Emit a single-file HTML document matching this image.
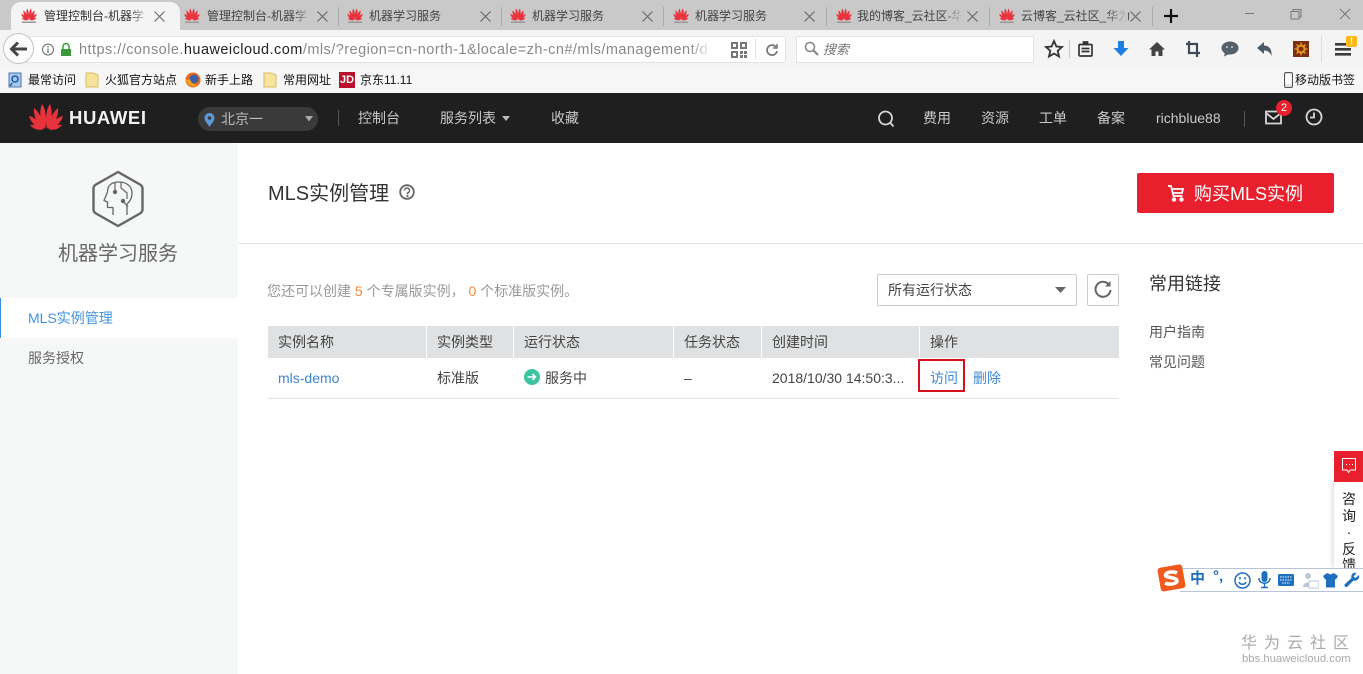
<!DOCTYPE html>
<html lang="zh-CN"><head><meta charset="utf-8"><title>MLS实例管理</title>
<style>
html,body{margin:0;padding:0;background:#fff}
body{width:1363px;height:674px;position:relative;overflow:hidden;font-family:"Liberation Sans","Noto Sans CJK SC",sans-serif;font-size:14px;color:#333}
.a,.t{position:absolute}
.t{white-space:nowrap;line-height:18px}
svg{position:absolute;display:block}
.sep{position:absolute;width:1px;background:#aaa}
.tab{color:#444;font-size:12px;top:7px}
.n{color:#c9c9c9;font-size:14px;top:109px}
.th{top:333px;color:#444}
.w{position:absolute;top:326px;width:1px;height:32px;background:#fff}
.c{top:11px}
</style></head><body>
<svg width="0" height="0" style="position:absolute"><defs>
<symbol id="hw" viewBox="0 0 34 27">
<g fill="#e8323c">
<path d="M16 26C11 19 10 8 13 1 17 6 18 18 16 26Z"/>
<path d="M18 26C23 19 24 8 21 1 17 6 16 18 18 26Z"/>
<path d="M15 26C9 22 4 13 5 5 10 9 15 18 15 26Z"/>
<path d="M19 26C25 22 30 13 29 5 24 9 19 18 19 26Z"/>
<path d="M14 26C8 25 2 20 0 13 6 14 12 20 14 26Z"/>
<path d="M20 26C26 25 32 20 34 13 28 14 22 20 20 26Z"/>
<path d="M14 26.500C9 27.500 4 26 1 22 6 21 11 23 14 26.500Z"/>
<path d="M20 26.500C25 27.500 30 26 33 22 28 21 23 23 20 26.500Z"/>
</g></symbol>
<symbol id="fav" viewBox="0 0 16 16"><use href="#hw" width="16" height="12.500"/><rect x="1" y="13.500" width="14" height="1.500" fill="#999"/></symbol>
<symbol id="cl" viewBox="0 0 11 11"><path d="M.5 .5L10.500 10.500M10.500 .5L.5 10.500" fill="none" stroke="#666" stroke-width="1.100"/></symbol>
</defs></svg>

<!-- tab strip -->
<div class="a" style="left:0;top:0;width:1363px;height:30px;background:#c9c9c9"></div>
<div class="a" style="left:11px;top:2px;width:169px;height:28px;background:#f4f4f4;border-radius:10px 10px 0 0"></div>
<svg style="left:21px;top:8px" width="16" height="16"><use href="#fav"/></svg><span class="t tab" style="left:44px;color:#333">管理控制台-机器学</span>
<svg style="left:184px;top:8px" width="16" height="16"><use href="#fav"/></svg><span class="t tab" style="left:207px">管理控制台-机器学</span>
<div class="sep" style="left:338px;top:7px;height:19px"></div>
<svg style="left:347px;top:8px" width="16" height="16"><use href="#fav"/></svg><span class="t tab" style="left:369px">机器学习服务</span>
<div class="sep" style="left:501px;top:7px;height:19px"></div>
<svg style="left:510px;top:8px" width="16" height="16"><use href="#fav"/></svg><span class="t tab" style="left:532px">机器学习服务</span>
<div class="sep" style="left:663px;top:7px;height:19px"></div>
<svg style="left:673px;top:8px" width="16" height="16"><use href="#fav"/></svg><span class="t tab" style="left:695px">机器学习服务</span>
<div class="sep" style="left:826px;top:7px;height:19px"></div>
<svg style="left:836px;top:8px" width="16" height="16"><use href="#fav"/></svg><span class="t tab" style="left:857px">我的博客_云社区-华</span>
<div class="sep" style="left:989px;top:7px;height:19px"></div>
<svg style="left:999px;top:8px" width="16" height="16"><use href="#fav"/></svg><span class="t tab" style="left:1021px">云博客_云社区_华为</span>
<div class="sep" style="left:1152px;top:7px;height:19px"></div>
<svg style="left:1163px;top:8px" width="16" height="16"><path d="M8 1V15M1 8H15" stroke="#111" stroke-width="2.200"/></svg>
<svg style="left:1240px;top:8px" width="120" height="14" fill="none" stroke="#777"><path d="M5 5.500H14"/><path d="M51 3.500H59V11H51ZM53 3.500V1.500H61V9H59"/><path d="M100 1L110 11M110 1L100 11"/></svg>
<div class="a" style="left:130px;top:7px;width:18px;height:18px;background:linear-gradient(90deg,rgba(244,244,244,0),#f4f4f4)"></div>
<div class="a" style="left:293px;top:7px;width:18px;height:18px;background:linear-gradient(90deg,rgba(201,201,201,0),#c9c9c9)"></div>
<div class="a" style="left:943px;top:7px;width:20px;height:18px;background:linear-gradient(90deg,rgba(201,201,201,0),#c9c9c9)"></div>
<div class="a" style="left:1106px;top:7px;width:22px;height:18px;background:linear-gradient(90deg,rgba(201,201,201,0),#c9c9c9)"></div>
<svg class="c" style="left:154px" width="11" height="11"><use href="#cl"/></svg>
<svg class="c" style="left:317px" width="11" height="11"><use href="#cl"/></svg>
<svg class="c" style="left:480px" width="11" height="11"><use href="#cl"/></svg>
<svg class="c" style="left:642px" width="11" height="11"><use href="#cl"/></svg>
<svg class="c" style="left:804px" width="11" height="11"><use href="#cl"/></svg>
<svg class="c" style="left:967px" width="11" height="11"><use href="#cl"/></svg>
<svg class="c" style="left:1130px" width="11" height="11"><use href="#cl"/></svg>

<!-- nav toolbar -->
<div class="a" style="left:0;top:30px;width:1363px;height:36px;background:#f4f4f4"></div>
<div class="a" style="left:26px;top:36px;width:758px;height:25px;background:#fff;border:1px solid #e3e3e3;box-sizing:content-box;border-radius:2px"></div>
<div class="a" style="left:3px;top:33px;width:29px;height:29px;border-radius:50%;background:#fbfbfb;border:1px solid #c4c4c4"></div>
<svg style="left:9px;top:41px" width="20" height="16"><path d="M9 1.500L2.500 8 9 14.500M3 8H18" fill="none" stroke="#444" stroke-width="3"/></svg>
<svg style="left:41px;top:42px" width="32" height="16"><circle cx="7" cy="7.500" r="5.500" fill="none" stroke="#666"/><path d="M7 6.500V11M7 4V5.500" stroke="#666" stroke-width="1.200"/><rect x="20" y="7" width="10" height="7" fill="#3a9a3a"/><path d="M22 7V4.500a3 3 0 0 1 6 0V7" fill="none" stroke="#3a9a3a" stroke-width="1.500"/></svg>
<span class="t" style="left:79px;top:41px;font-size:14.500px;color:#888;letter-spacing:.46px">https://console.<span style="color:#222">huaweicloud.com</span>/mls/?region=cn-north-1&amp;locale=zh-cn#/mls/management/d</span>
<div class="a" style="left:712px;top:37px;width:68px;height:25px;background:#fff"></div>
<div class="a" style="left:690px;top:37px;width:22px;height:25px;background:linear-gradient(90deg,rgba(255,255,255,0),#fff)"></div>
<svg style="left:731px;top:42px" width="16" height="16" fill="#777"><path d="M0 0H7V7H0ZM2 2V5H5V2ZM9 0H16V7H9ZM11 2V5H14V2ZM0 9H7V16H0ZM2 11V14H5V11ZM9 9H12V12H9ZM13 9H16V12H13ZM9 13H12V16H9ZM13 13H16V16H13Z" fill-rule="evenodd"/></svg>
<div class="sep" style="left:755px;top:38px;height:21px;background:#e2e2e2"></div>
<svg style="left:765px;top:43px" width="14" height="14" fill="none" stroke="#777" stroke-width="1.800"><path d="M11 4A5 5 0 1 0 12 8"/><path d="M12 1V5H8" stroke-width="1.500"/></svg>
<div class="a" style="left:796px;top:36px;width:236px;height:25px;background:#fff;border:1px solid #e3e3e3"></div>
<svg style="left:804px;top:41px" width="15" height="15" fill="none" stroke="#888" stroke-width="1.600"><circle cx="6" cy="6" r="4.500"/><path d="M9.500 9.500L14 14" stroke-width="2.200"/></svg>
<span class="t" style="left:823px;top:41px;color:#777;font-size:13px;font-style:italic">搜索</span>
<svg style="left:1044px;top:39px" width="20" height="20"><path d="M10 2L12.400 7.500 18 8 13.700 11.800 15 17.500 10 14.500 5 17.500 6.300 11.800 2 8 7.600 7.500Z" fill="none" stroke="#333" stroke-width="1.800"/></svg>
<div class="sep" style="left:1069px;top:40px;height:18px;background:#ccc"></div>
<svg style="left:1078px;top:41px" width="15" height="16" fill="none" stroke="#333" stroke-width="1.700"><rect x="1" y="3.500" width="13" height="11.500" rx="1"/><path d="M3.500 7.500H11.500M3.500 10.500H11.500"/><rect x="5.500" y="1" width="4" height="2.500" fill="#333"/></svg>
<svg style="left:1113px;top:41px" width="16" height="16"><path d="M5 0H11V7H15.500L8 15 .5 7H5Z" fill="#1e7fe0"/></svg>
<svg style="left:1149px;top:41px" width="16" height="16"><path d="M8 1L16 8.500H13.500V15H9.500V10.500H6.500V15H2.500V8.500H0Z" fill="#444"/></svg>
<svg style="left:1186px;top:41px" width="14" height="16" fill="none" stroke="#3f4b57" stroke-width="2.200"><path d="M3 0V12H14M0 3H11V16"/></svg>
<svg style="left:1221px;top:41px" width="18" height="16"><ellipse cx="9" cy="7" rx="8.500" ry="6.500" fill="#53616d"/><path d="M4 11L3 15.500 8 13Z" fill="#53616d"/><circle cx="6" cy="6" r="1" fill="#ccc"/><circle cx="11" cy="6" r="1" fill="#ccc"/></svg>
<svg style="left:1257px;top:42px" width="16" height="16"><path d="M7 0V3.500C12 3.500 15 7 14.500 14 13 10 10.500 8.500 7 8.500V12L0 6Z" fill="#4d5a66"/></svg>
<svg style="left:1293px;top:41px" width="16" height="16"><rect width="16" height="16" fill="#7c2f0f"/><circle cx="8" cy="8" r="3.500" fill="none" stroke="#eb9a22" stroke-width="2"/><path d="M8 1.500V4M8 12V14.500M1.500 8H4M12 8H14.500M3.500 3.500L5 5M11 11L12.500 12.500M12.500 3.500L11 5M5 11L3.500 12.500" stroke="#eb9a22" stroke-width="1.300"/></svg>
<div class="sep" style="left:1321px;top:36px;height:26px;background:#ddd"></div>
<svg style="left:1335px;top:43px" width="16" height="14" fill="#3b3b3b"><rect width="16" height="2.600"/><rect y="5" width="16" height="2.600"/><rect y="10" width="16" height="2.600"/></svg>
<div class="a" style="left:1346px;top:36px;width:11px;height:11px;background:#fdb917;border-radius:2px;color:#fff;font-size:9px;line-height:11px;text-align:center;font-weight:bold">!</div>

<!-- bookmarks -->
<div class="a" style="left:0;top:66px;width:1363px;height:27px;background:#f6f6f6"></div>
<svg style="left:8px;top:72px" width="15" height="16"><rect x="1" y="1" width="12" height="14" fill="#a9c8ea" stroke="#4b79b5"/><circle cx="7" cy="7" r="3" fill="none" stroke="#1f5aa5" stroke-width="1.500"/><path d="M4 11L2 14" stroke="#1f5aa5" stroke-width="1.500"/></svg>
<span class="t" style="left:28px;top:71px;font-size:12px;color:#111">最常访问</span>
<svg style="left:85px;top:72px" width="14" height="16"><path d="M1 1H8L13 3V15H1Z" fill="#f8e39c" stroke="#d9bc63"/></svg>
<span class="t" style="left:105px;top:71px;font-size:12px;color:#111">火狐官方站点</span>
<svg style="left:185px;top:72px" width="16" height="16"><circle cx="8" cy="8" r="7.500" fill="#e66a1f"/><circle cx="9" cy="7" r="4.500" fill="#3d5fa8"/><path d="M1 8C2 14 9 16 13 13 9 13 6 11 5 7Z" fill="#f4a11d"/></svg>
<span class="t" style="left:205px;top:71px;font-size:12px;color:#111">新手上路</span>
<svg style="left:263px;top:72px" width="14" height="16"><path d="M1 1H8L13 3V15H1Z" fill="#f8e39c" stroke="#d9bc63"/></svg>
<span class="t" style="left:283px;top:71px;font-size:12px;color:#111">常用网址</span>
<div class="a" style="left:339px;top:72px;width:16px;height:16px;background:#b8112b;color:#fff;font-size:11px;font-weight:bold;line-height:16px;text-align:center">JD</div>
<span class="t" style="left:360px;top:71px;font-size:12px;color:#111">京东11.11</span>
<svg style="left:1284px;top:72px" width="9" height="16"><rect x=".5" y=".5" width="8" height="15" rx="1.500" fill="#ddd" stroke="#555"/><rect x="1.500" y="2.500" width="6" height="10" fill="#fff"/></svg>
<span class="t" style="left:1295px;top:71px;font-size:12px;color:#111">移动版书签</span>

<!-- header -->
<div class="a" style="left:0;top:93px;width:1363px;height:50px;background:#1f1f1f"></div>
<svg style="left:29px;top:103px" width="34" height="27"><use href="#hw"/></svg>
<span class="t" style="left:69px;top:109px;font-size:18.500px;font-weight:bold;color:#f2f2f2;letter-spacing:.6px">HUAWEI</span>
<div class="a" style="left:198px;top:107px;width:120px;height:24px;background:#3a3a3a;border-radius:12px"></div>
<svg style="left:204px;top:113px" width="11" height="14"><path d="M5.500 0A5 5 0 0 1 10.500 5C10.500 8 7 11 5.500 14 4 11 .5 8 .5 5A5 5 0 0 1 5.500 0Z" fill="#5b9bdc"/><circle cx="5.500" cy="5" r="1.800" fill="#3a3a3a"/></svg>
<span class="t n" style="left:221px;top:110px;color:#bbb">北京一</span>
<svg style="left:305px;top:116px" width="8" height="6"><path d="M0 0H8L4 5.500Z" fill="#aaa"/></svg>
<div class="sep" style="left:338px;top:110px;height:16px;background:#555"></div>
<span class="t n" style="left:358px">控制台</span>
<span class="t n" style="left:440px">服务列表</span>
<svg style="left:502px;top:116px" width="8" height="5"><path d="M0 0H8L4 5Z" fill="#bbb"/></svg>
<span class="t n" style="left:551px">收藏</span>
<svg style="left:877px;top:110px" width="18" height="18" fill="none" stroke="#d6d6d6" stroke-width="1.800"><circle cx="8.500" cy="8" r="6.500"/><path d="M13 12.500L16.500 16.500"/></svg>
<span class="t n" style="left:923px">费用</span>
<span class="t n" style="left:981px">资源</span>
<span class="t n" style="left:1039px">工单</span>
<span class="t n" style="left:1097px">备案</span>
<span class="t n" style="left:1156px">richblue88</span>
<div class="sep" style="left:1244px;top:111px;height:16px;background:#555"></div>
<svg style="left:1265px;top:110px" width="17" height="15" fill="none" stroke="#d6d6d6" stroke-width="1.800"><path d="M1 1.500H16V13.500H1ZM1 3L8.500 9 16 3"/></svg>
<div class="a" style="left:1276px;top:100px;width:16px;height:16px;border-radius:50%;background:#e8202e;color:#fff;font-size:11px;line-height:16px;text-align:center">2</div>
<svg style="left:1305px;top:108px" width="18" height="18" fill="none" stroke="#d6d6d6" stroke-width="1.800"><circle cx="9" cy="9" r="7.500"/><path d="M9 4.500V9.500H5"/></svg>

<!-- sidebar -->
<div class="a" style="left:0;top:143px;width:238px;height:531px;background:#f6f8f8"></div>
<svg style="left:92px;top:170px" width="52" height="58" fill="none" stroke="#666" stroke-linejoin="round"><path d="M26 2L48 14.500Q50.500 16 50.500 18.500V39.500Q50.500 42 48 43.500L26 56 4 43.500Q1.500 42 1.500 39.500V18.500Q1.500 16 4 14.500Z" stroke-width="2.400"/><path d="M21 45V37.500H15.500V32L12 30.500 15.500 22C15.500 15 20 12 27 12 34 12 40 16 40 23 40 29 37 32 35 34V45" stroke-width="1.300"/><path d="M23 12V21M29 12V18L35 23V29M31 31L36 37" stroke-width="1.200"/><circle cx="23" cy="22" r="1.700" fill="#666"/><circle cx="31" cy="31" r="1.700" fill="#666"/></svg>
<span class="t" style="left:58px;top:241px;font-size:20px;line-height:26px;color:#666">机器学习服务</span>
<div class="a" style="left:0;top:298px;width:238px;height:40px;background:#fff"></div>
<div class="a" style="left:0;top:298px;width:1px;height:40px;background:#3b8fdc"></div>
<span class="t" style="left:28px;top:309px;color:#3f93de;font-size:14px">MLS实例管理</span>
<span class="t" style="left:28px;top:349px;color:#666;font-size:14px">服务授权</span>

<!-- title -->
<span class="t" style="left:268px;top:181px;font-size:20px;line-height:26px;color:#333">MLS实例管理</span>
<svg style="left:399px;top:184px" width="16" height="16" fill="none" stroke="#666" stroke-width="1.800"><circle cx="8" cy="8" r="6.800"/><path d="M5.500 6.500A2.500 2.500 0 1 1 8.500 9V10.200" stroke-width="1.500"/><circle cx="8.500" cy="12" r=".6" fill="#666" stroke-width="1"/></svg>
<div class="a" style="left:1137px;top:173px;width:197px;height:40px;background:#e8202e;border-radius:2px"></div>
<svg style="left:1167px;top:184px" width="18" height="18" fill="none" stroke="#fff" stroke-width="1.800"><path d="M1 2H4L6.500 12H15.500M5 5H16L15 9H6"/><circle cx="7" cy="15.500" r="1.300" fill="#fff"/><circle cx="14.500" cy="15.500" r="1.300" fill="#fff"/></svg>
<span class="t" style="left:1194px;top:181px;font-size:18px;line-height:26px;color:#fff">购买MLS实例</span>
<div class="a" style="left:238px;top:243px;width:1125px;height:1px;background:#e5e5e5"></div>

<!-- content -->
<span class="t" style="left:267px;top:282px;color:#999;font-size:14px">您还可以创建 <span style="color:#ee8a3c">5</span> 个专属版实例， <span style="color:#ee8a3c">0</span> 个标准版实例。</span>
<div class="a" style="left:877px;top:274px;width:198px;height:30px;border:1px solid #ccc;border-radius:2px;background:#fff"></div>
<span class="t" style="left:888px;top:281px;color:#444">所有运行状态</span>
<svg style="left:1055px;top:287px" width="11" height="7"><path d="M0 0H11L5.500 6Z" fill="#666"/></svg>
<div class="a" style="left:1087px;top:274px;width:30px;height:30px;border:1px solid #ccc;border-radius:2px;background:#fff"></div>
<svg style="left:1094px;top:280px" width="18" height="18" fill="none" stroke="#666" stroke-width="2"><path d="M15.500 5.500A7.500 7.500 0 1 0 16.500 10"/><path d="M16.500 1V6.500H11" fill="#666" stroke="none"/></svg>

<div class="a" style="left:268px;top:326px;width:851px;height:32px;background:#dfe1e2"></div>
<div class="w" style="left:426px"></div><div class="w" style="left:513px"></div><div class="w" style="left:673px"></div><div class="w" style="left:761px"></div><div class="w" style="left:919px"></div>
<span class="t th" style="left:278px">实例名称</span>
<span class="t th" style="left:437px">实例类型</span>
<span class="t th" style="left:524px">运行状态</span>
<span class="t th" style="left:684px">任务状态</span>
<span class="t th" style="left:772px">创建时间</span>
<span class="t th" style="left:930px">操作</span>
<span class="t" style="left:278px;top:369px;color:#3c87d0;font-size:14px">mls-demo</span>
<span class="t" style="left:437px;top:369px;color:#444">标准版</span>
<svg style="left:524px;top:369px" width="16" height="16"><circle cx="8" cy="8" r="8" fill="#3cc4a0"/><path d="M3.500 8H11.500M8.500 5L11.500 8 8.500 11" fill="none" stroke="#fff" stroke-width="1.600"/></svg>
<span class="t" style="left:545px;top:369px;color:#444">服务中</span>
<span class="t" style="left:684px;top:369px;color:#444">–</span>
<span class="t" style="left:772px;top:369px;color:#444;font-size:14px">2018/10/30 14:50:3...</span>
<div class="a" style="left:918px;top:359px;width:43px;height:29px;border:2px solid #d8101c;background:#fff"></div>
<span class="t" style="left:930px;top:369px;color:#3c87d0">访问</span>
<span class="t" style="left:973px;top:369px;color:#3c87d0">删除</span>
<div class="a" style="left:268px;top:398px;width:851px;height:1px;background:#e3e3e3"></div>

<span class="t" style="left:1149px;top:273px;font-size:18px;line-height:22px;color:#333">常用链接</span>
<span class="t" style="left:1149px;top:323px;color:#555">用户指南</span>
<span class="t" style="left:1149px;top:353px;color:#555">常见问题</span>

<!-- feedback -->
<div class="a" style="left:1334px;top:482px;width:29px;height:86px;background:#fff;box-shadow:-2px 0 4px rgba(0,0,0,.12);overflow:hidden"><span class="a" style="left:7px;top:9px;font-size:14px;line-height:16.500px;color:#222;width:16px;text-align:center">咨<br>询<br>·<br>反<br>馈</span></div>
<div class="a" style="left:1334px;top:451px;width:29px;height:31px;background:#e8202e"></div>
<svg style="left:1341px;top:457px" width="16" height="18" fill="none" stroke="#fff"><path d="M1.500 1.500H14.500V13H9L7.500 15.500 6 13H1.500Z"/><path d="M5 7.500H6M8 7.500H9M11 7.500H12"/></svg>

<!-- IME bar -->
<div class="a" style="left:1180px;top:568px;width:183px;height:22px;background:#fff;border-top:1px solid #b5c4d8;border-bottom:1px solid #b5c4d8"></div>
<svg style="left:1157px;top:564px" width="29" height="29"><rect x="2" y="2" width="25" height="24" rx="3" fill="#f05a1c" transform="rotate(-10 14 14)"/><path d="M20 9C16 7 9 8 8.500 11 8 14 20 13 20 17 19.500 20 12 21 8 19" fill="none" stroke="#fff" stroke-width="3.600"/></svg>
<span class="t" style="left:1190px;top:570px;font-size:15px;font-weight:bold;color:#1f6fbf">中</span>
<span class="t" style="left:1213px;top:568px;font-size:15px;font-weight:bold;color:#1f6fbf">°,</span>
<svg style="left:1234px;top:572px" width="17" height="17" fill="none" stroke="#1f6fbf" stroke-width="1.500"><circle cx="8.500" cy="8.500" r="7.500"/><path d="M5 10C6 13 11 13 12 10"/><path d="M6 5V7.500M11 5V7.500"/></svg>
<svg style="left:1258px;top:571px" width="13" height="18" fill="#1f6fbf"><rect x="3.500" y="0" width="6" height="11" rx="3"/><path d="M1 7C1 14 12 14 12 7M6.500 12V16M3 16.500H10" fill="none" stroke="#1f6fbf" stroke-width="1.500"/></svg>
<svg style="left:1278px;top:574px" width="16" height="12"><rect width="16" height="12" rx="1.500" fill="#1f6fbf"/><path d="M2 3H14M2 6H14M4 9H12" stroke="#fff" stroke-dasharray="1.500 1"/></svg>
<svg style="left:1302px;top:572px" width="17" height="17" fill="#bcc8d6"><circle cx="6" cy="4" r="3"/><path d="M1 15C1 9 11 9 11 15Z"/><rect x="7" y="9" width="10" height="7" fill="#fff" stroke="#bcc8d6"/></svg>
<svg style="left:1323px;top:573px" width="15" height="15"><path d="M4 0L7.500 1.500 11 0 15 3 13 6.500 12 6V14.500H3V6L2 6.500 0 3Z" fill="#1f6fbf"/></svg>
<svg style="left:1344px;top:572px" width="16" height="16"><path d="M15 3L11.500 6 9.500 4.500 12.500 1C9.500 0 6.500 2.500 7.500 6L.5 12.500C0 14 1.500 15.500 3 15L9.500 8.500C13 9.500 16 6.500 15 3Z" fill="#1f6fbf"/></svg>

<!-- watermark -->
<span class="t" style="left:1241px;top:635px;font-size:16px;color:#aaa;letter-spacing:7px">华为云社区</span>
<span class="t" style="left:1242px;top:650px;font-size:11.300px;color:#aaa">bbs.huaweicloud.com</span>
</body></html>
